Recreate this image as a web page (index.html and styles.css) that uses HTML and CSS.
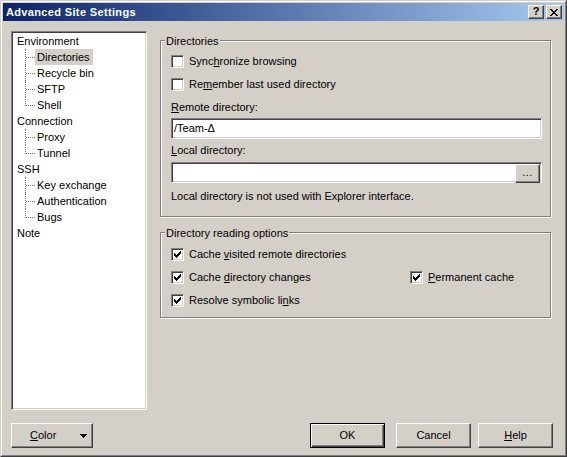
FILE: index.html
```html
<!DOCTYPE html>
<html>
<head>
<meta charset="utf-8">
<title>Advanced Site Settings</title>
<link rel="stylesheet" href="styles.css">
</head>
<body>
<div class="window">
  <div class="frame">
    <div class="titlebar">
      <span class="title">Advanced Site Settings</span>
      <div class="caption-btns">
        <span class="cap-btn cap-help">?</span>
        <span class="cap-btn cap-close">
          <svg width="8" height="7" viewBox="0 0 8 7" shape-rendering="crispEdges">
            <rect x="0" y="0" width="2" height="1"/><rect x="6" y="0" width="2" height="1"/>
            <rect x="1" y="1" width="2" height="1"/><rect x="5" y="1" width="2" height="1"/>
            <rect x="2" y="2" width="4" height="1"/>
            <rect x="3" y="3" width="2" height="1"/>
            <rect x="2" y="4" width="4" height="1"/>
            <rect x="1" y="5" width="2" height="1"/><rect x="5" y="5" width="2" height="1"/>
            <rect x="0" y="6" width="2" height="1"/><rect x="6" y="6" width="2" height="1"/>
          </svg>
        </span>
      </div>
    </div>

    <div class="client">
      <div class="main">
        <ul class="tree">
          <li class="node">Environment</li>
          <li class="node child"><span class="sel">Directories</span></li>
          <li class="node child">Recycle bin</li>
          <li class="node child">SFTP</li>
          <li class="node child last">Shell</li>
          <li class="node">Connection</li>
          <li class="node child">Proxy</li>
          <li class="node child last">Tunnel</li>
          <li class="node">SSH</li>
          <li class="node child">Key exchange</li>
          <li class="node child">Authentication</li>
          <li class="node child last">Bugs</li>
          <li class="node">Note</li>
        </ul>

        <div class="pane">
          <div class="group group-dirs">
            <div class="legend">Directories</div>
            <div class="check row-first">
              <span class="box"></span>
              <span class="check-text">Sync<u>h</u>ronize browsing</span>
            </div>
            <div class="check row-next">
              <span class="box"></span>
              <span class="check-text">Re<u>m</u>ember last used directory</span>
            </div>
            <div class="field-label label-remote"><u>R</u>emote directory:</div>
            <div class="field"><span class="field-text">/Team-Δ</span></div>
            <div class="field-label label-local"><u>L</u>ocal directory:</div>
            <div class="field field-browse">
              <span class="field-text"></span>
              <span class="browse-btn">...</span>
            </div>
            <div class="info">Local directory is not used with Explorer interface.</div>
          </div>

          <div class="group group-reading">
            <div class="legend">Directory reading options</div>
            <div class="check-grid">
              <div class="check">
                <span class="box checked"><svg width="7" height="7" viewBox="0 0 7 7" shape-rendering="crispEdges"><rect x="6" y="0" width="1" height="1"/><rect x="5" y="1" width="2" height="1"/><rect x="0" y="2" width="1" height="1"/><rect x="4" y="2" width="3" height="1"/><rect x="0" y="3" width="2" height="1"/><rect x="3" y="3" width="3" height="1"/><rect x="0" y="4" width="5" height="1"/><rect x="1" y="5" width="3" height="1"/><rect x="2" y="6" width="1" height="1"/></svg></span>
                <span class="check-text">Cache <u>v</u>isited remote directories</span>
              </div>
              <div class="check grid-row2">
                <span class="box checked"><svg width="7" height="7" viewBox="0 0 7 7" shape-rendering="crispEdges"><rect x="6" y="0" width="1" height="1"/><rect x="5" y="1" width="2" height="1"/><rect x="0" y="2" width="1" height="1"/><rect x="4" y="2" width="3" height="1"/><rect x="0" y="3" width="2" height="1"/><rect x="3" y="3" width="3" height="1"/><rect x="0" y="4" width="5" height="1"/><rect x="1" y="5" width="3" height="1"/><rect x="2" y="6" width="1" height="1"/></svg></span>
                <span class="check-text">Cache <u>d</u>irectory changes</span>
              </div>
              <div class="check grid-row2">
                <span class="box checked"><svg width="7" height="7" viewBox="0 0 7 7" shape-rendering="crispEdges"><rect x="6" y="0" width="1" height="1"/><rect x="5" y="1" width="2" height="1"/><rect x="0" y="2" width="1" height="1"/><rect x="4" y="2" width="3" height="1"/><rect x="0" y="3" width="2" height="1"/><rect x="3" y="3" width="3" height="1"/><rect x="0" y="4" width="5" height="1"/><rect x="1" y="5" width="3" height="1"/><rect x="2" y="6" width="1" height="1"/></svg></span>
                <span class="check-text"><u>P</u>ermanent cache</span>
              </div>
              <div class="check">
                <span class="box checked"><svg width="7" height="7" viewBox="0 0 7 7" shape-rendering="crispEdges"><rect x="6" y="0" width="1" height="1"/><rect x="5" y="1" width="2" height="1"/><rect x="0" y="2" width="1" height="1"/><rect x="4" y="2" width="3" height="1"/><rect x="0" y="3" width="2" height="1"/><rect x="3" y="3" width="3" height="1"/><rect x="0" y="4" width="5" height="1"/><rect x="1" y="5" width="3" height="1"/><rect x="2" y="6" width="1" height="1"/></svg></span>
                <span class="check-text">Resolve symbolic li<u>n</u>ks</span>
              </div>
            </div>
          </div>
        </div>
      </div>

      <div class="buttons">
        <div class="btn btn-color">
          <span><u>C</u>olor</span>
          <svg width="7" height="4" viewBox="0 0 7 4" shape-rendering="crispEdges"><rect x="0" y="0" width="7" height="1"/><rect x="1" y="1" width="5" height="1"/><rect x="2" y="2" width="3" height="1"/><rect x="3" y="3" width="1" height="1"/></svg>
        </div>
        <div class="btn btn-default btn-ok">OK</div>
        <div class="btn btn-cancel">Cancel</div>
        <div class="btn btn-help"><span><u>H</u>elp</span></div>
      </div>
    </div>
  </div>
</div>
</body>
</html>
```

FILE: styles.css
```css
* { box-sizing: border-box; }

html, body {
  margin: 0;
  padding: 0;
  background: #d4d0c8;
}

body {
  font-family: "Liberation Sans", Arial, sans-serif;
  font-size: 11px;
  line-height: 13px;
  color: #000;
}

u { text-decoration: underline; text-underline-offset: 1px; }

.window {
  width: 567px;
  height: 457px;
  border: 1px solid;
  border-color: #d4d0c8 #404040 #404040 #d4d0c8;
}

.frame {
  height: 100%;
  border: 1px solid;
  border-color: #fff #808080 #808080 #fff;
  padding: 1px;
  display: flex;
  flex-direction: column;
}

/* Title bar */
.titlebar {
  height: 18px;
  display: flex;
  align-items: center;
  justify-content: space-between;
  padding: 0 2px 0 3px;
  background: linear-gradient(to right, #0a246a, #a6caf0);
}

.title {
  color: #fff;
  font-weight: bold;
  font-size: 11px;
  line-height: 13px;
  letter-spacing: 0.35px;
  padding-top: 1px;
}

.caption-btns {
  display: flex;
  gap: 2px;
}

.cap-btn {
  width: 16px;
  height: 14px;
  display: flex;
  align-items: center;
  justify-content: center;
  background: #d4d0c8;
  border: 1px solid;
  border-color: #fff #404040 #404040 #fff;
  box-shadow: inset -1px -1px 0 #808080;
}

.cap-help {
  font-weight: bold;
  font-size: 11px;
  line-height: 11px;
  padding-bottom: 1px;
}

.cap-close svg { display: block; margin-left: 0; }

/* Client area */
.client {
  flex: 1;
  padding: 10px 0 0 8px;
}

.main {
  display: flex;
  height: 379px;
}

/* Tree */
.tree {
  list-style: none;
  margin: 0;
  width: 136px;
  height: 379px;
  background: #fff;
  border: 1px solid;
  border-color: #808080 #fff #fff #808080;
  box-shadow: inset 1px 1px 0 #404040, inset -1px -1px 0 #d4d0c8;
  padding: 1px;
}

.node {
  height: 16px;
  line-height: 16px;
  padding-left: 4px;
  white-space: nowrap;
}

.node.child {
  position: relative;
  padding-left: 24px;
}

.node.child::before {
  content: "";
  position: absolute;
  left: 12px;
  top: 0;
  height: 16px;
  border-left: 1px dotted #808080;
}

.node.child.last::before {
  height: 9px;
}

.node.child::after {
  content: "";
  position: absolute;
  left: 13px;
  top: 8px;
  width: 9px;
  border-top: 1px dotted #808080;
}

.sel {
  display: inline-block;
  background: #d4d0c8;
  padding: 0 3px 0 2px;
  margin-left: -2px;
  height: 16px;
}

/* Right pane */
.pane {
  margin-left: 13px;
  margin-top: 9px;
  width: 391px;
}

.group {
  border: 1px solid #808080;
  box-shadow: 1px 1px 0 #fff, inset 1px 1px 0 #fff;
  padding: 0 8px 13px 10px;
}

.group-reading {
  margin-top: 15px;
  padding-bottom: 10px;
}

.legend {
  width: fit-content;
  margin-top: -6px;
  margin-left: -6px;
  padding: 0 1px;
  background: #d4d0c8;
  height: 13px;
  line-height: 13px;
  position: relative;
}

.check {
  display: flex;
  align-items: center;
  height: 13px;
  white-space: nowrap;
}

.row-first { margin-top: 7px; }
.row-next { margin-top: 10px; }

.box {
  width: 13px;
  height: 13px;
  flex: none;
  background: #fff;
  border: 1px solid;
  border-color: #808080 #fff #fff #808080;
  box-shadow: inset 1px 1px 0 #404040, inset -1px -1px 0 #d4d0c8;
  padding: 2px;
  margin-right: 5px;
}

.box svg { display: block; }

.check-text { line-height: 13px; }

.field-label { height: 13px; }
.label-remote { margin-top: 10px; }
.label-local { margin-top: 5px; }

.field {
  display: flex;
  height: 21px;
  width: 371px;
  margin-top: 4px;
  background: #fff;
  border: 1px solid;
  border-color: #808080 #fff #fff #808080;
  box-shadow: inset 1px 1px 0 #404040, inset -1px -1px 0 #d4d0c8;
  padding: 2px;
}

.field-browse { margin-top: 5px; }

.field-text {
  flex: 1;
  line-height: 15px;
}

.browse-btn {
  width: 25px;
  height: 19px;
  margin: -1px -1px -1px 0;
  flex: none;
  background: #d4d0c8;
  border: 1px solid;
  border-color: #fff #404040 #404040 #fff;
  box-shadow: inset -1px -1px 0 #808080;
  text-align: center;
  line-height: 15px;
  letter-spacing: 0.5px;
}

.info { margin-top: 7px; height: 13px; }

.check-grid {
  display: grid;
  grid-template-columns: 239px auto;
  row-gap: 10px;
  margin-top: 8px;
}

.check-grid > .check:first-child { grid-column: 1 / 3; }
.check-grid > .check:last-child { grid-column: 1 / 3; }

/* Bottom buttons */
.buttons {
  display: flex;
  margin-top: 13px;
  height: 25px;
}

.btn {
  height: 25px;
  width: 75px;
  display: flex;
  align-items: center;
  justify-content: center;
  background: #d4d0c8;
  border: 1px solid;
  border-color: #fff #404040 #404040 #fff;
  box-shadow: inset -1px -1px 0 #808080;
  line-height: 13px;
}

.btn-color {
  width: 82px;
  justify-content: space-between;
  padding: 0 5px 0 18px;
}

.btn-color svg { display: block; }

.btn-default {
  border: 1px solid #000;
  box-shadow: inset 1px 1px 0 #fff, inset -1px -1px 0 #404040, inset -2px -2px 0 #808080;
}

.btn-ok { margin-left: 217px; }
.btn-cancel { margin-left: 11px; }
.btn-help { margin-left: 7px; }
```
